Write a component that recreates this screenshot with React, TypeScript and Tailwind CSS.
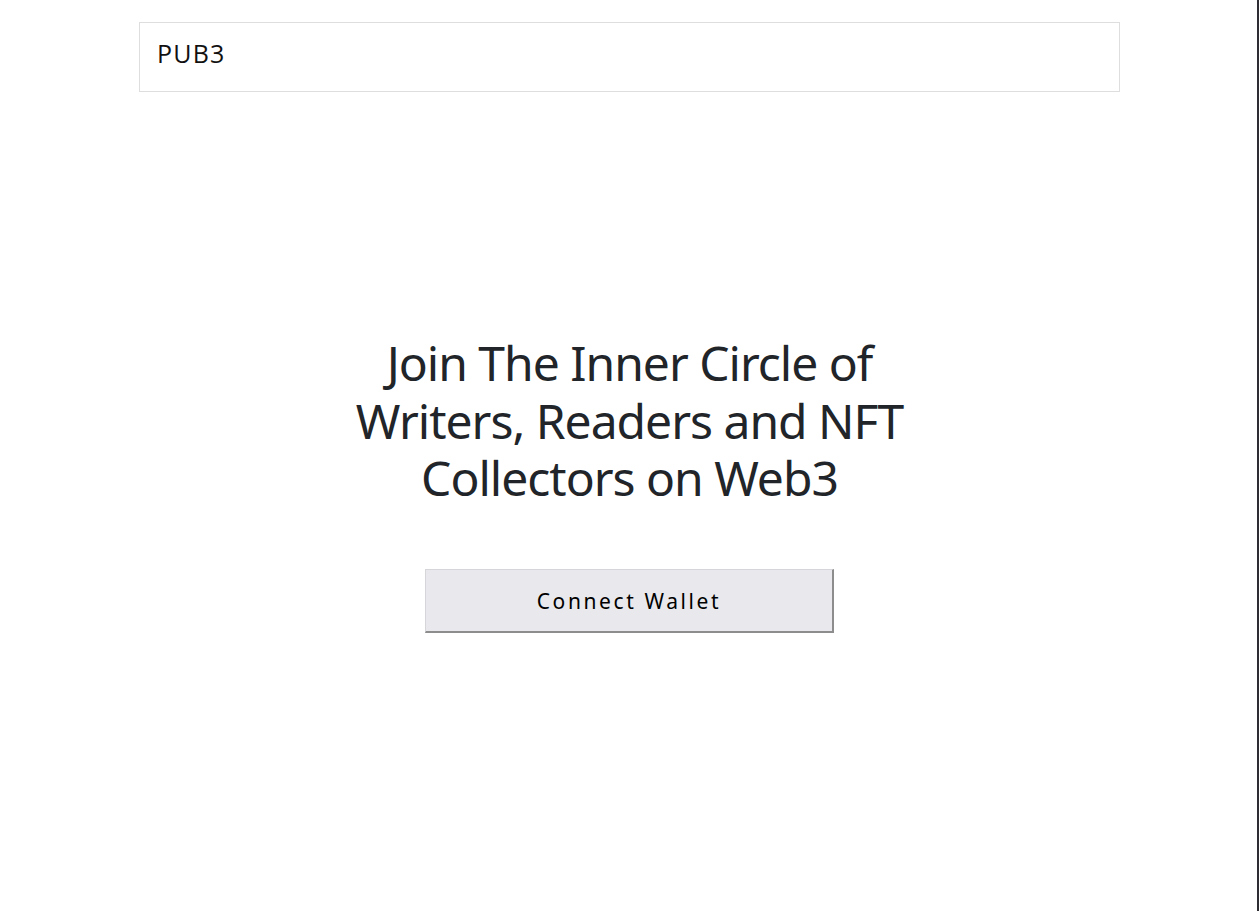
import React from "react";

export default function App() {
  return (
    <div className="relative min-h-[911px] w-full bg-white">
      <div className="flex flex-col items-center">
        <header className="mt-[22px] w-[981px] h-[70px] border border-[#dedede] flex items-center px-[17px] pb-[7px]">
          <span
            className="text-[25px] text-[#111] leading-none tracking-[1.2px]"
            style={{ fontFamily: "'Open Sans', 'Noto Sans', sans-serif" }}
          >
            PUB3
          </span>
        </header>
        <main
          className="flex flex-col items-center mt-[242px]"
          style={{ fontFamily: "'Noto Sans', 'Open Sans', sans-serif" }}
        >
          <h1 className="text-[48px] leading-[1.2] text-[#212529] text-center font-normal tracking-[-1px]">
            Join The Inner Circle of
            <br />
            Writers, Readers and NFT
            <br />
            Collectors on Web3
          </h1>
          <button className="mt-[62px] w-[409px] h-[64px] pt-[3px] bg-[#e9e9ed] border-t border-l border-t-[#d6d6da] border-l-[#d6d6da] border-r-2 border-b-2 border-r-[#8d8d8d] border-b-[#8d8d8d] text-[21px] tracking-[2.6px] text-black">
            Connect Wallet
          </button>
        </main>
      </div>
      <div className="absolute right-0 top-0 bottom-0 w-[2px] bg-[#2e2d33]" />
    </div>
  );
}
